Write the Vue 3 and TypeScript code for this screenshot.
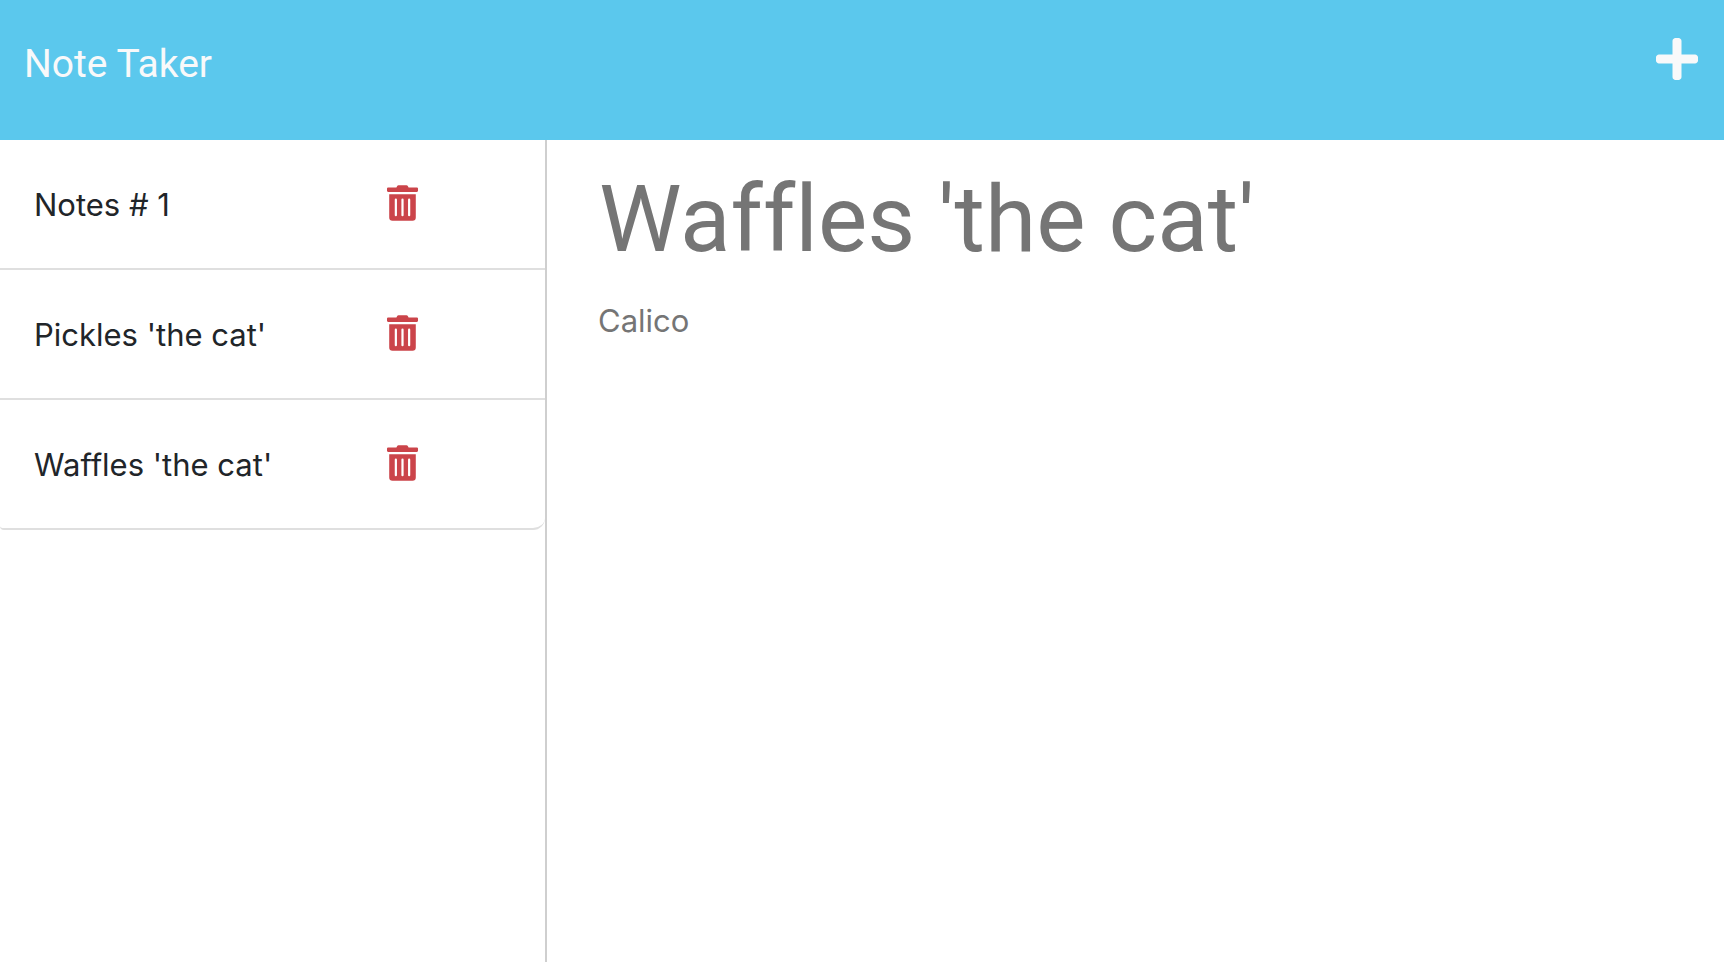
<script setup lang="ts">
import { ref } from 'vue'

interface Note {
  id: number
  title: string
  text: string
}

const notes = ref<Note[]>([
  { id: 1, title: 'Notes # 1', text: '' },
  { id: 2, title: "Pickles 'the cat'", text: '' },
  { id: 3, title: "Waffles 'the cat'", text: 'Calico' },
])

const title = ref("Waffles 'the cat'")
const text = ref('Calico')

function openNote(note: Note) {
  title.value = note.title
  text.value = note.text
}

function removeNote(id: number) {
  notes.value = notes.value.filter((note) => note.id !== id)
}

function newNote() {
  title.value = ''
  text.value = ''
}
</script>

<template>
  <div class="page">
    <header class="navbar">
      <a class="brand" href="#">Note Taker</a>
      <button class="icon-button add" type="button" aria-label="New note" @click="newNote">
        <svg class="plus" viewBox="0 0 448 512" aria-hidden="true">
          <path
            d="M416 208H272V64c0-17.67-14.33-32-32-32h-32c-17.67 0-32 14.33-32 32v144H32c-17.67 0-32 14.33-32 32v32c0 17.67 14.33 32 32 32h144v144c0 17.67 14.33 32 32 32h32c17.67 0 32-14.33 32-32V304h144c17.67 0 32-14.33 32-32v-32c0-17.67-14.33-32-32-32z"
          />
        </svg>
      </button>
    </header>
    <div class="content">
      <aside class="sidebar">
        <ul class="list">
          <li v-for="note in notes" :key="note.id" class="item">
            <button class="note-title" type="button" @click="openNote(note)">{{ note.title }}</button>
            <button
              class="icon-button"
              type="button"
              :aria-label="`Delete ${note.title}`"
              @click="removeNote(note.id)"
            >
              <svg class="trash" viewBox="0 0 448 512" aria-hidden="true">
                <path
                  d="M32 464a48 48 0 0 0 48 48h288a48 48 0 0 0 48-48V128H32zm272-256a16 16 0 0 1 32 0v224a16 16 0 0 1-32 0zm-96 0a16 16 0 0 1 32 0v224a16 16 0 0 1-32 0zm-96 0a16 16 0 0 1 32 0v224a16 16 0 0 1-32 0zM432 32H312l-9.4-18.7A24 24 0 0 0 281.1 0H166.8a23.72 23.72 0 0 0-21.4 13.3L136 32H16A16 16 0 0 0 0 48v32a16 16 0 0 0 16 16h416a16 16 0 0 0 16-16V48a16 16 0 0 0-16-16z"
                />
              </svg>
            </button>
          </li>
        </ul>
      </aside>
      <main class="editor">
        <input v-model="title" class="title-field" type="text" aria-label="Note title" />
        <textarea v-model="text" class="text-field" aria-label="Note text"></textarea>
      </main>
    </div>
  </div>
</template>

<style>
body {
  margin: 0;
  background: #fff;
}
</style>

<style scoped>
.page {
  display: flex;
  flex-direction: column;
  min-height: 100vh;
  font-family: Inter, 'Liberation Sans', sans-serif;
  font-variant-ligatures: none;
  color: #212529;
}

.page * {
  box-sizing: border-box;
}

button,
input,
textarea {
  margin: 0;
  padding: 0;
  border: 0;
  background: transparent;
  color: inherit;
  font: inherit;
  font-variant-ligatures: none;
}

button {
  cursor: pointer;
}

.navbar {
  display: flex;
  justify-content: space-between;
  align-items: flex-start;
  min-height: 140px;
  padding: 32px 24px;
  background: #5bc8ed;
  color: #f8f9fa;
}

.brand {
  color: inherit;
  font-family: Roboto, 'Liberation Sans', sans-serif;
  font-size: 39px;
  line-height: 64px;
  text-decoration: none;
}

.icon-button {
  display: flex;
}

.add {
  padding: 3px 2px;
}

.plus {
  width: 42px;
  height: 48px;
  fill: currentColor;
}

.content {
  display: grid;
  grid-template-columns: 547fr 1177fr;
  flex: 1;
}

.sidebar {
  border-right: 2px solid #cfcfcf;
}

.list {
  margin: 0;
  padding: 0;
  list-style: none;
}

.item {
  display: grid;
  grid-template-columns: 2fr 1fr;
  column-gap: 36px;
  align-items: center;
  height: 130px;
  padding: 0 0 2px 34px;
  border-bottom: 2px solid #dfdfdf;
}

.item:last-child {
  border-radius: 0 0 12px 4px;
}

.note-title {
  padding-top: 4px;
  font-size: 31px;
  line-height: 48px;
  text-align: left;
  white-space: nowrap;
}

.trash {
  width: 31px;
  height: 36px;
  fill: #cb444a;
}

.editor {
  display: flex;
  flex-direction: column;
  padding: 24px 48px;
}

.title-field,
.text-field {
  width: 100%;
  outline: 0;
  color: #757575;
}

.title-field {
  height: 112px;
  padding: 0 4px;
  font-family: Roboto, 'Liberation Sans', sans-serif;
  font-size: 93px;
  line-height: 112px;
}

.text-field {
  flex: 1;
  margin-top: 21px;
  padding: 0 3px;
  font-size: 31px;
  line-height: 48px;
  resize: none;
}
</style>
